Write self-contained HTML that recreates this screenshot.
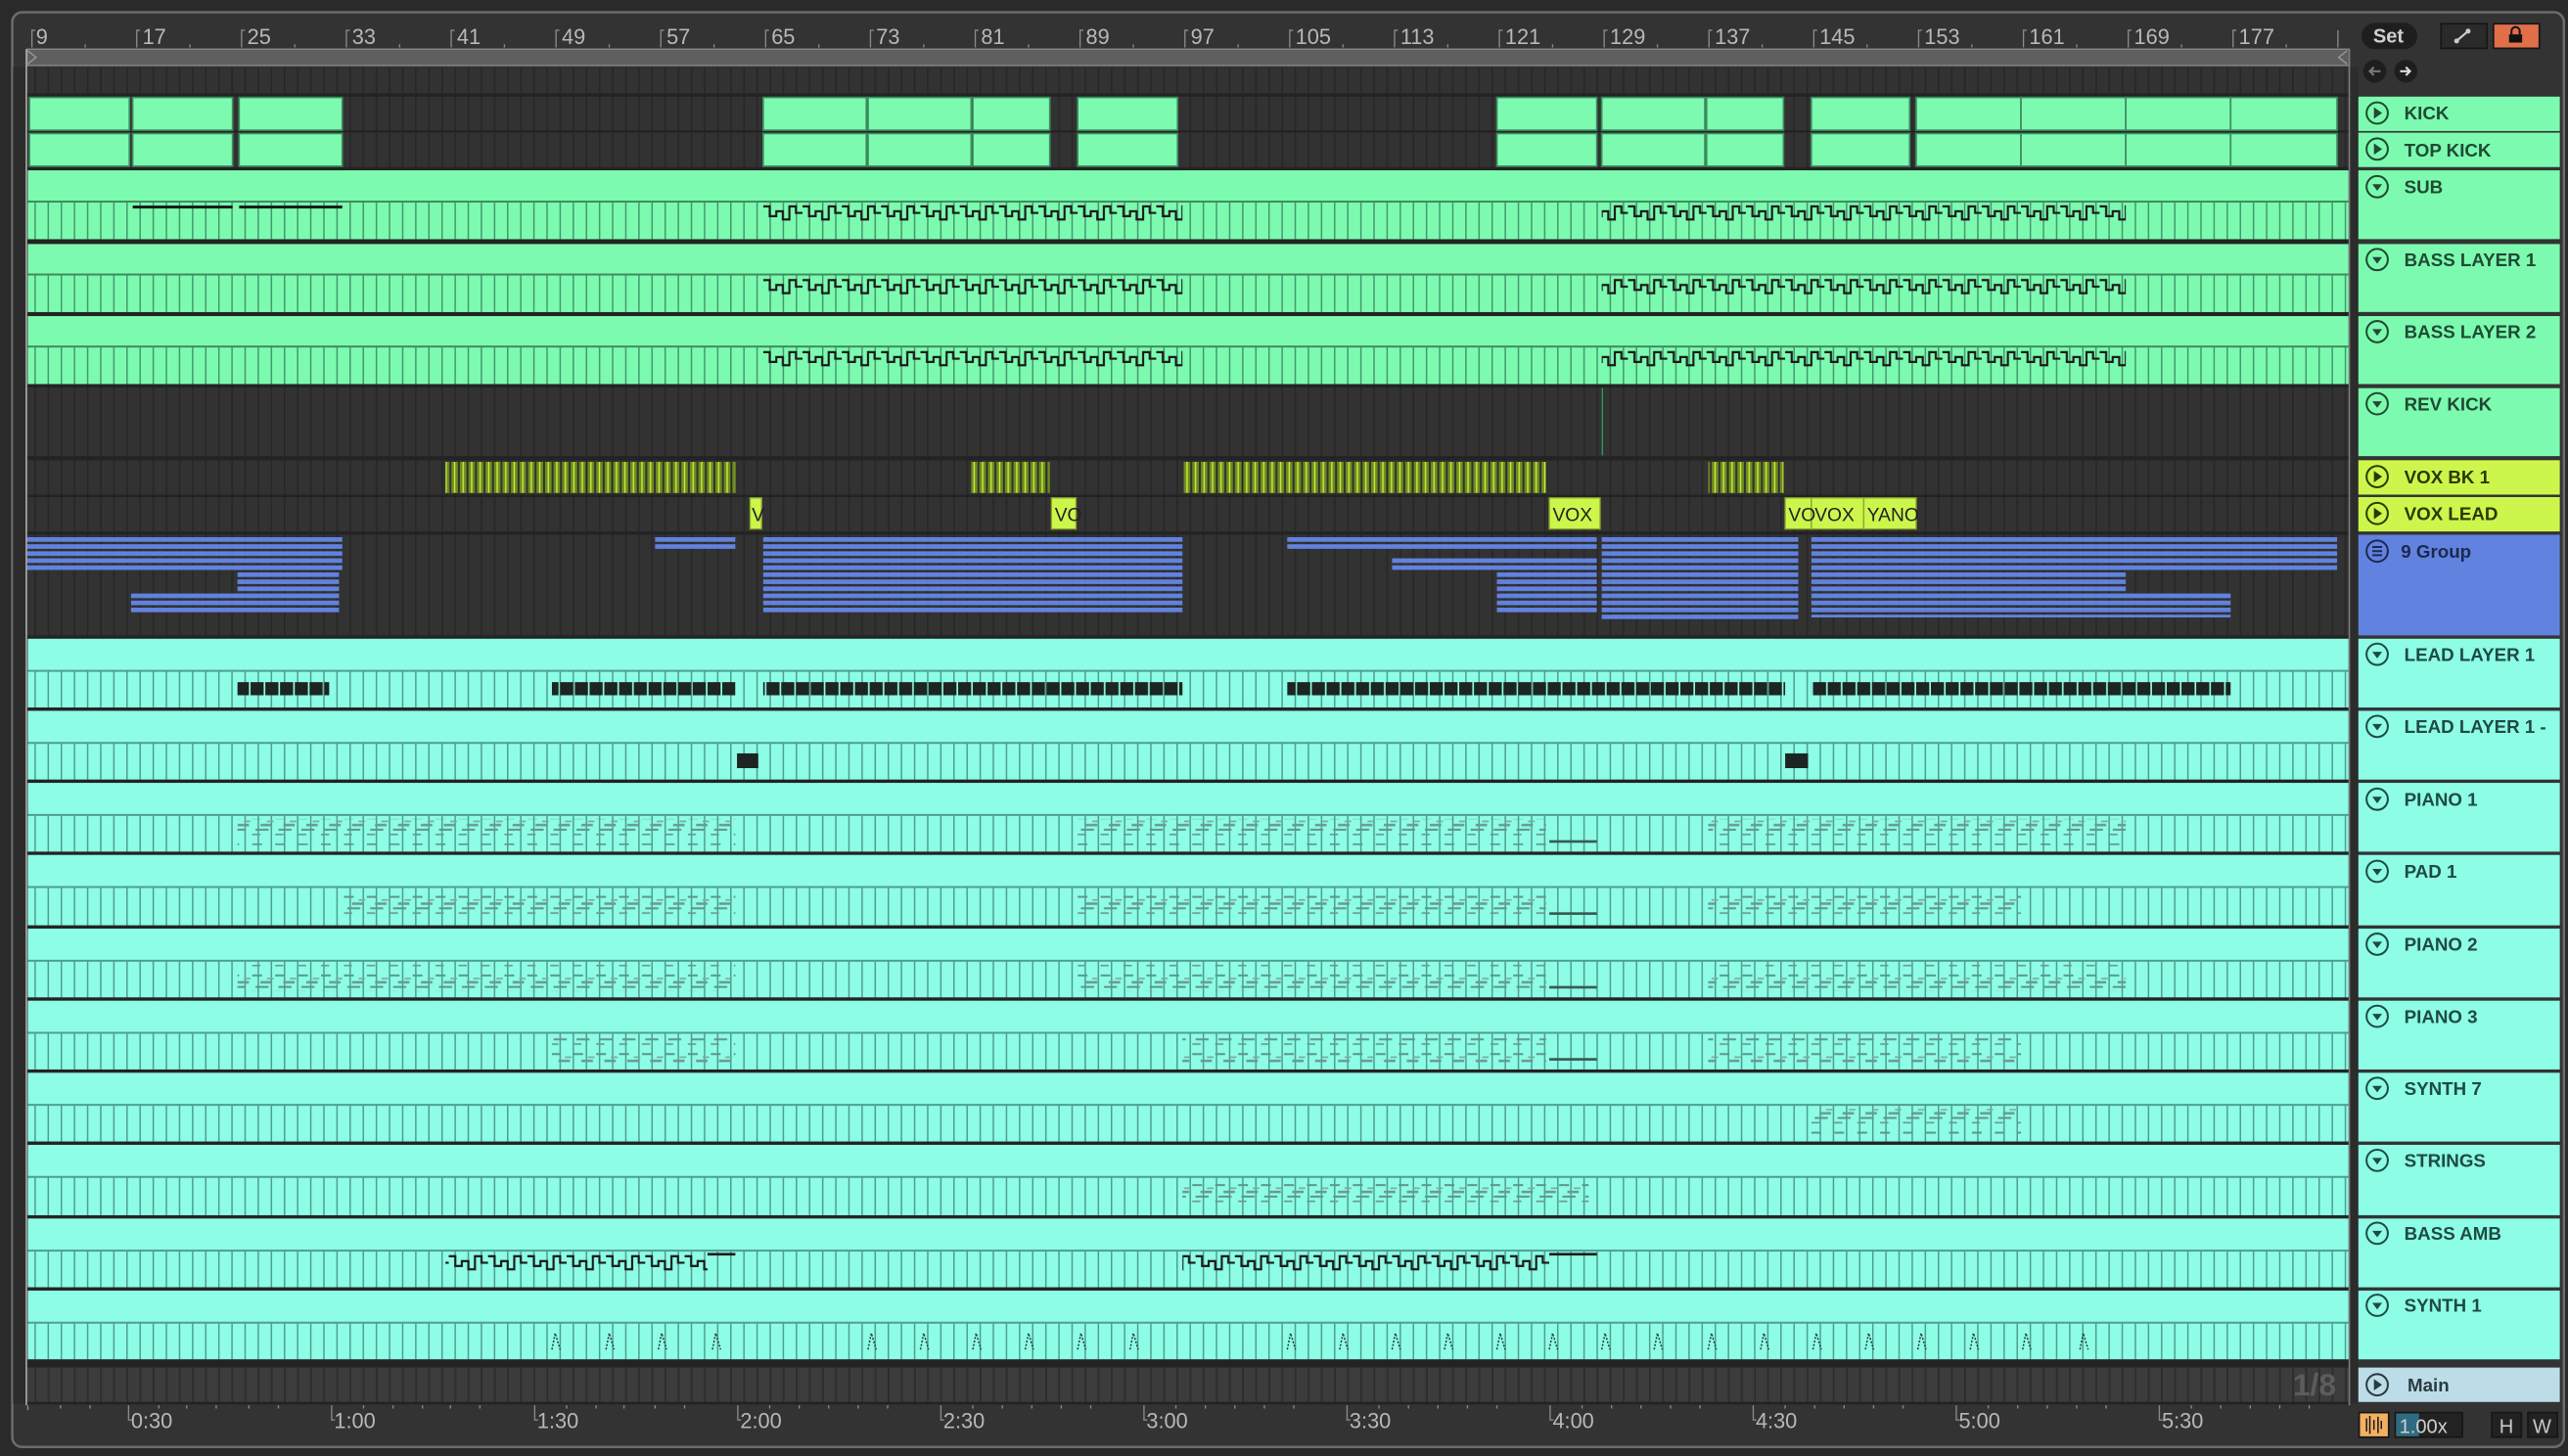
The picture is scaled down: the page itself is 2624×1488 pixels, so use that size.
<!DOCTYPE html>
<html><head><meta charset="utf-8"><style>
html,body{margin:0;padding:0;background:#2a2a2a;overflow:hidden}
svg{display:block}
text{font-family:"Liberation Sans",sans-serif}
.rn{font-family:"Liberation Sans Narrow","Liberation Sans",sans-serif;font-size:13px;fill:#b8b8b8}
.hd{font-size:11.2px;font-weight:bold}
</style></head><body>
<svg width="2624" height="1488" viewBox="0 0 1568 889" preserveAspectRatio="none" xmlns="http://www.w3.org/2000/svg">
<defs>
<pattern id="gd" patternUnits="userSpaceOnUse" x="21" y="0" width="8.015" height="10"><rect width="8.015" height="10" fill="#323232"/><rect width="1" height="10" fill="#272727"/></pattern>
<pattern id="gdb" patternUnits="userSpaceOnUse" x="21" y="0" width="8.015" height="10"><rect width="8.015" height="10" fill="#3c3c3c"/><rect width="1.2" height="10" fill="#2e2e2e"/></pattern>
<pattern id="gG" patternUnits="userSpaceOnUse" x="21" y="0" width="8.015" height="10"><rect width="8.015" height="10" fill="#7cfbb0"/><rect width="0.9" height="10" fill="#45996c"/></pattern>
<pattern id="gC" patternUnits="userSpaceOnUse" x="21" y="0" width="8.015" height="10"><rect width="8.015" height="10" fill="#8dfde6"/><rect width="0.9" height="10" fill="#4f9f90"/></pattern>
<pattern id="sq" patternUnits="userSpaceOnUse" x="466" y="0" width="24" height="40"><path d="M0 2h4v6h4v-3h4v5h4v-8h4v4h4" fill="none" stroke="#1b1b1b" stroke-width="1.3"/></pattern>
<pattern id="wav" patternUnits="userSpaceOnUse" x="0" y="0" width="5.2" height="20"><rect width="4" height="20" fill="#6e8b1f"/><rect x="1.6" width="0.8" height="20" fill="#c9f03e"/></pattern>
<pattern id="bl" patternUnits="userSpaceOnUse" x="0" y="328" width="10" height="4.3"><rect width="10" height="2.8" fill="#6182de"/></pattern>
<pattern id="blk" patternUnits="userSpaceOnUse" x="0" y="0" width="9" height="10"><rect width="8" height="10" fill="#1c2522"/></pattern>
<pattern id="pn" patternUnits="userSpaceOnUse" x="0" y="0" width="14" height="16"><rect x="0" y="3" width="6" height="1.2" fill="#5f958a"/><rect x="5" y="7" width="7" height="1.5" fill="#6a9a90"/><rect x="2" y="10" width="8" height="1.2" fill="#5f958a"/><rect x="9" y="5" width="4" height="1" fill="#7aaaa0"/><rect x="0" y="13" width="5" height="1" fill="#6a9a90"/></pattern>
</defs>

<rect width="1568" height="889" fill="#2a2a2a"/>
<rect x="7.5" y="7.5" width="1558" height="876" rx="6" fill="#333" stroke="#6c6c6c" stroke-width="1.5"/>

<g class="rn">
<text x="22" y="27">9</text><text x="87" y="27">17</text><text x="151" y="27">25</text><text x="215" y="27">33</text><text x="279" y="27">41</text><text x="343" y="27">49</text><text x="407" y="27">57</text><text x="471" y="27">65</text><text x="535" y="27">73</text><text x="599" y="27">81</text><text x="663" y="27">89</text><text x="727" y="27">97</text><text x="791" y="27">105</text><text x="855" y="27">113</text><text x="919" y="27">121</text><text x="983" y="27">129</text><text x="1047" y="27">137</text><text x="1111" y="27">145</text><text x="1175" y="27">153</text><text x="1239" y="27">161</text><text x="1303" y="27">169</text><text x="1367" y="27">177</text>
</g>
<g stroke="#8a8a8a" stroke-width="0.8" fill="none">
<path d="M19.5 29V18.5h2M83.5 29V18.5h2M147.5 29V18.5h2M211.5 29V18.5h2M275.5 29V18.5h2M339.5 29V18.5h2M403.5 29V18.5h2M467.5 29V18.5h2M531.5 29V18.5h2M595.5 29V18.5h2M659.5 29V18.5h2M723.5 29V18.5h2M787.5 29V18.5h2M851.5 29V18.5h2M915.5 29V18.5h2M979.5 29V18.5h2M1043.5 29V18.5h2M1107.5 29V18.5h2M1171.5 29V18.5h2M1235.5 29V18.5h2M1299.5 29V18.5h2M1363.5 29V18.5h2M1427.5 29V18.5"/>
<path d="M52 29v-2M116 29v-2M180 29v-2M244 29v-2M308 29v-2M372 29v-2M436 29v-2M500 29v-2M564 29v-2M628 29v-2M692 29v-2M756 29v-2M820 29v-2M884 29v-2M948 29v-2M1012 29v-2M1076 29v-2M1140 29v-2M1204 29v-2M1268 29v-2M1332 29v-2M1396 29v-2"/>
</g>
<rect x="16.5" y="30" width="1418" height="10" fill="#5f5f5f" stroke="#8a8a8a" stroke-width="0.8"/>
<path d="M17 31l5 4l-5 4M1433 31l-5 4l5 4" fill="none" stroke="#9a9a9a" stroke-width="0.8"/>

<rect x="16" y="41" width="1418" height="790" fill="url(#gd)"/>
<rect x="8" y="41" width="8" height="816" fill="#2c2c2c"/>
<g fill="#232323">
<rect x="16" y="57" width="1418" height="2"/><rect x="16" y="79.5" width="1418" height="1.5"/><rect x="16" y="102" width="1418" height="2"/>
<rect x="16" y="146" width="1418" height="3"/><rect x="16" y="190.5" width="1418" height="2.5"/><rect x="16" y="234.5" width="1418" height="2"/>
<rect x="16" y="278.5" width="1418" height="2.5"/><rect x="16" y="302" width="1418" height="1.5"/><rect x="16" y="324.5" width="1418" height="2"/>
<rect x="16" y="388" width="1418" height="2"/>
</g>

<g fill="#7cfbb0" stroke="#3d8c5f" stroke-width="1">
<rect x="18" y="59.5" width="61" height="20"/><rect x="81" y="59.5" width="61" height="20"/><rect x="146" y="59.5" width="63" height="20"/>
<rect x="466" y="59.5" width="63" height="20"/><rect x="530" y="59.5" width="63" height="20"/><rect x="594" y="59.5" width="47" height="20"/><rect x="658" y="59.5" width="61" height="20"/>
<rect x="914" y="59.5" width="61" height="20"/><rect x="978" y="59.5" width="63" height="20"/><rect x="1042" y="59.5" width="47" height="20"/><rect x="1106" y="59.5" width="60" height="20"/>
<rect x="1170" y="59.5" width="64" height="20"/><rect x="1234" y="59.5" width="64" height="20"/><rect x="1298" y="59.5" width="64" height="20"/><rect x="1362" y="59.5" width="65" height="20"/>
<rect x="18" y="81.5" width="61" height="20"/><rect x="81" y="81.5" width="61" height="20"/><rect x="146" y="81.5" width="63" height="20"/>
<rect x="466" y="81.5" width="63" height="20"/><rect x="530" y="81.5" width="63" height="20"/><rect x="594" y="81.5" width="47" height="20"/><rect x="658" y="81.5" width="61" height="20"/>
<rect x="914" y="81.5" width="61" height="20"/><rect x="978" y="81.5" width="63" height="20"/><rect x="1042" y="81.5" width="47" height="20"/><rect x="1106" y="81.5" width="60" height="20"/>
<rect x="1170" y="81.5" width="64" height="20"/><rect x="1234" y="81.5" width="64" height="20"/><rect x="1298" y="81.5" width="64" height="20"/><rect x="1362" y="81.5" width="65" height="20"/>
</g>

<g>
<rect x="17" y="104" width="1417" height="42" fill="#7cfbb0"/><rect x="17" y="123.5" width="1417" height="22.5" fill="url(#gG)"/><rect x="17" y="122.5" width="1417" height="1.2" fill="#3d8c5f"/>
<rect x="17" y="149" width="1417" height="41.5" fill="#7cfbb0"/><rect x="17" y="168" width="1417" height="22.5" fill="url(#gG)"/><rect x="17" y="167" width="1417" height="1.2" fill="#3d8c5f"/>
<rect x="17" y="193" width="1417" height="41.5" fill="#7cfbb0"/><rect x="17" y="212" width="1417" height="22.5" fill="url(#gG)"/><rect x="17" y="211" width="1417" height="1.2" fill="#3d8c5f"/>
</g>
<g fill="#1b1b1b">
<rect x="81" y="125.5" width="61" height="1.8"/><rect x="146" y="125.5" width="63" height="1.8"/>
</g>
<g transform="translate(0,124)" fill="url(#sq)"><rect x="466" y="0" width="256" height="12"/><rect x="978" y="0" width="320" height="12"/></g>
<g transform="translate(0,169)" fill="url(#sq)"><rect x="466" y="0" width="256" height="12"/><rect x="978" y="0" width="320" height="12"/></g>
<g transform="translate(0,213)" fill="url(#sq)"><rect x="466" y="0" width="256" height="12"/><rect x="978" y="0" width="320" height="12"/></g>

<rect x="978" y="237" width="0.8" height="41" fill="#2f9a63"/>

<g fill="url(#wav)">
<rect x="272" y="282" width="177" height="19"/><rect x="593" y="282" width="48" height="19"/><rect x="722" y="282" width="222" height="19"/><rect x="1043" y="282" width="46" height="19"/>
</g>
<g fill="#cdf64d" stroke="#8ba82a" stroke-width="0.8">
<rect x="458" y="304" width="7" height="19"/><rect x="642" y="304" width="15" height="19"/><rect x="946" y="304" width="31" height="19"/><rect x="1090" y="304" width="16" height="19"/><rect x="1106" y="304" width="32" height="19"/><rect x="1138" y="304" width="32" height="19"/>
</g>
<g font-size="11.5" fill="#222" font-family="Liberation Sans">
<text x="459" y="318">V</text><text x="644" y="318">VO</text><text x="948" y="318">VOX</text><text x="1092" y="318">VO</text><text x="1108" y="318">VOX</text><text x="1140" y="318">YANO</text>
</g>

<g fill="url(#bl)">
<rect x="16" y="328" width="193" height="21"/><rect x="145" y="349" width="62" height="14"/><rect x="80" y="362" width="127" height="13"/>
<rect x="400" y="328" width="49" height="8"/>
<rect x="466" y="328" width="256" height="47"/>
<rect x="786" y="328" width="189" height="8"/><rect x="850" y="340" width="125" height="8"/><rect x="914" y="349" width="61" height="26"/>
<rect x="978" y="328" width="120" height="50"/>
<rect x="1106" y="328" width="321" height="21"/><rect x="1106" y="349" width="192" height="14"/><rect x="1106" y="362" width="256" height="15"/>
</g>

<g>
<rect x="17" y="390" width="1417" height="42" fill="#8dfde6"/><rect x="17" y="410" width="1417" height="22" fill="url(#gC)"/><rect x="17" y="409" width="1417" height="1.2" fill="#4f9f90"/>
<rect x="16" y="432" width="1418" height="2" fill="#232323"/>
<rect x="17" y="434" width="1417" height="42" fill="#8dfde6"/><rect x="17" y="454" width="1417" height="22" fill="url(#gC)"/><rect x="17" y="453" width="1417" height="1.2" fill="#4f9f90"/>
<rect x="16" y="476" width="1418" height="2" fill="#232323"/>
<rect x="17" y="478" width="1417" height="42" fill="#8dfde6"/><rect x="17" y="498" width="1417" height="22" fill="url(#gC)"/><rect x="17" y="497" width="1417" height="1.2" fill="#4f9f90"/>
<rect x="16" y="520" width="1418" height="2" fill="#232323"/>
<rect x="17" y="522" width="1417" height="43" fill="#8dfde6"/><rect x="17" y="542" width="1417" height="23" fill="url(#gC)"/><rect x="17" y="541" width="1417" height="1.2" fill="#4f9f90"/>
<rect x="16" y="565" width="1418" height="2" fill="#232323"/>
<rect x="17" y="567" width="1417" height="42" fill="#8dfde6"/><rect x="17" y="587" width="1417" height="22" fill="url(#gC)"/><rect x="17" y="586" width="1417" height="1.2" fill="#4f9f90"/>
<rect x="16" y="609" width="1418" height="2" fill="#232323"/>
<rect x="17" y="611" width="1417" height="42" fill="#8dfde6"/><rect x="17" y="631" width="1417" height="22" fill="url(#gC)"/><rect x="17" y="630" width="1417" height="1.2" fill="#4f9f90"/>
<rect x="16" y="653" width="1418" height="2" fill="#232323"/>
<rect x="17" y="655" width="1417" height="42" fill="#8dfde6"/><rect x="17" y="675" width="1417" height="22" fill="url(#gC)"/><rect x="17" y="674" width="1417" height="1.2" fill="#4f9f90"/>
<rect x="16" y="697" width="1418" height="2" fill="#232323"/>
<rect x="17" y="699" width="1417" height="43" fill="#8dfde6"/><rect x="17" y="719" width="1417" height="23" fill="url(#gC)"/><rect x="17" y="718" width="1417" height="1.2" fill="#4f9f90"/>
<rect x="16" y="742" width="1418" height="2" fill="#232323"/>
<rect x="17" y="744" width="1417" height="42" fill="#8dfde6"/><rect x="17" y="764" width="1417" height="22" fill="url(#gC)"/><rect x="17" y="763" width="1417" height="1.2" fill="#4f9f90"/>
<rect x="16" y="786" width="1418" height="2" fill="#232323"/>
<rect x="17" y="788" width="1417" height="42" fill="#8dfde6"/><rect x="17" y="808" width="1417" height="22" fill="url(#gC)"/><rect x="17" y="807" width="1417" height="1.2" fill="#4f9f90"/>
<rect x="16" y="830" width="1418" height="5" fill="#232323"/>
</g>
<g fill="url(#blk)">
<rect x="145" y="416.5" width="56" height="8"/><rect x="337" y="416.5" width="112" height="8"/><rect x="466" y="416.5" width="256" height="8"/><rect x="786" y="416.5" width="304" height="8"/><rect x="1106" y="416.5" width="256" height="8"/>
</g>
<rect x="450" y="460" width="13" height="9" fill="#1c2522"/><rect x="1090" y="460" width="14" height="9" fill="#1c2522"/>
<g fill="url(#pn)">
<rect x="145" y="500" width="304" height="16"/><rect x="658" y="500" width="286" height="16"/><rect x="1043" y="500" width="255" height="16"/>
<rect x="210" y="544" width="239" height="16"/><rect x="658" y="544" width="286" height="16"/><rect x="1043" y="544" width="191" height="16"/>
<rect x="145" y="589" width="304" height="16"/><rect x="658" y="589" width="286" height="16"/><rect x="1043" y="589" width="255" height="16"/>
<rect x="337" y="633" width="112" height="16"/><rect x="722" y="633" width="222" height="16"/><rect x="1043" y="633" width="191" height="16"/>
<rect x="1106" y="677" width="128" height="16"/>
<rect x="722" y="721" width="248" height="16"/>
</g>
<g fill="#3b5a53">
<rect x="946" y="513" width="29" height="1.6"/><rect x="946" y="557" width="29" height="1.6"/><rect x="946" y="602" width="29" height="1.6"/><rect x="946" y="646" width="29" height="1.6"/>
</g>
<g transform="translate(0,765)" fill="url(#sq)"><rect x="272" y="0" width="160" height="12"/><rect x="722" y="0" width="224" height="12"/></g>
<rect x="432" y="765" width="17" height="1.6" fill="#1b1b1b"/><rect x="946" y="765" width="29" height="1.6" fill="#1b1b1b"/>
<g fill="none" stroke="#2a3a36" stroke-width="0.9" stroke-dasharray="1.2 1">
<path d="M337 824l2-10l3 10M370 824l2-10l3 10M402 824l2-10l3 10M435 824l2-10l3 10M530 824l2-10l3 10M562 824l2-10l3 10M594 824l2-10l3 10M626 824l2-10l3 10M658 824l2-10l3 10M690 824l2-10l3 10M786 824l2-10l3 10M818 824l2-10l3 10M850 824l2-10l3 10M882 824l2-10l3 10M914 824l2-10l3 10M946 824l2-10l3 10M978 824l2-10l3 10M1010 824l2-10l3 10M1043 824l2-10l3 10M1075 824l2-10l3 10M1107 824l2-10l3 10M1139 824l2-10l3 10M1171 824l2-10l3 10M1203 824l2-10l3 10M1235 824l2-10l3 10M1270 824l2-10l3 10"/>
</g>

<rect x="16" y="835" width="1418" height="21" fill="url(#gdb)"/>
<text x="1400" y="852" font-size="19" font-weight="bold" fill="#5c5c5c">1/8</text>
<rect x="16" y="856" width="1418" height="1.5" fill="#232323"/>

<g fill="none" stroke="#8a8a8a" stroke-width="0.8">
<path d="M17 858v3M37 858v2M55 858v2M97 858v2M114 858v2M132 858v2M152 858v2M170 858v2M222 858v2M240 858v2M258 858v2M275 858v2M293 858v2M346 858v2M364 858v2M381 858v2M400 858v2M418 858v2M470 858v2M488 858v2M506 858v2M524 858v2M542 858v2M594 858v2M612 858v2M630 858v2M648 858v2M666 858v2M718 858v2M736 858v2M754 858v2M772 858v2M790 858v2M842 858v2M860 858v2M878 858v2M896 858v2M914 858v2M966 858v2M984 858v2M1002 858v2M1020 858v2M1038 858v2M1090 858v2M1108 858v2M1126 858v2M1144 858v2M1162 858v2M1214 858v2M1232 858v2M1250 858v2M1268 858v2M1286 858v2M1338 858v2M1356 858v2M1374 858v2M1392 858v2M1410 858v2"/>
<path d="M78.5 858v9h2M202.5 858v9h2M326.5 858v9h2M450.5 858v9h2M574.5 858v9h2M698.5 858v9h2M822.5 858v9h2M946.5 858v9h2M1070.5 858v9h2M1194.5 858v9h2M1318.5 858v9h2"/>
</g>
<g class="rn">
<text x="80" y="872">0:30</text><text x="204" y="872">1:00</text><text x="328" y="872">1:30</text><text x="452" y="872">2:00</text><text x="576" y="872">2:30</text><text x="700" y="872">3:00</text><text x="824" y="872">3:30</text><text x="948" y="872">4:00</text><text x="1072" y="872">4:30</text><text x="1196" y="872">5:00</text><text x="1320" y="872">5:30</text>
</g>

<rect x="15.6" y="30" width="1" height="828" fill="#a8a8a8"/>
<rect x="1434" y="30" width="1" height="828" fill="#7a7a7a"/>
<rect x="1435" y="41" width="5" height="816" fill="#2c2c2c"/>

<rect x="1442" y="14" width="34" height="16" rx="8" fill="#1e1e1e"/>
<text x="1449" y="26" font-size="12" font-weight="bold" fill="#d0d0d0">Set</text>
<rect x="1490.5" y="14.5" width="28" height="15" fill="#2a2a2a" stroke="#161616"/>
<path d="M1500 25l7-6" stroke="#ccc" stroke-width="1.3"/><circle cx="1500" cy="25" r="1.5" fill="#ccc"/><circle cx="1507" cy="19" r="1.5" fill="#ccc"/>
<rect x="1522.5" y="14.5" width="28" height="15" fill="#e06f4a" stroke="#161616"/>
<rect x="1532" y="21" width="8" height="5" fill="#111"/><path d="M1533.5 21v-2a2.5 2.5 0 0 1 5 0v2" fill="none" stroke="#111" stroke-width="1.2"/>
<circle cx="1450" cy="43.5" r="7" fill="#1e1e1e"/><circle cx="1469" cy="43.5" r="7" fill="#1e1e1e"/>
<path d="M1453.5 43.5h-6M1449.5 41l-2.5 2.5l2.5 2.5" fill="none" stroke="#777" stroke-width="1.3"/>
<path d="M1465.5 43.5h6M1469 41l2.5 2.5l-2.5 2.5" fill="none" stroke="#ddd" stroke-width="1.3"/>

<g>
<rect x="1440" y="59" width="123" height="21" fill="#7cfbb0"/>
<rect x="1440" y="81" width="123" height="21" fill="#7cfbb0"/>
<rect x="1440" y="104" width="123" height="42" fill="#7cfbb0"/>
<rect x="1440" y="149" width="123" height="41.5" fill="#7cfbb0"/>
<rect x="1440" y="193" width="123" height="41.5" fill="#7cfbb0"/>
<rect x="1440" y="237" width="123" height="41.5" fill="#7cfbb0"/>
<rect x="1440" y="281" width="123" height="21" fill="#cdf64d"/>
<rect x="1440" y="303.5" width="123" height="21" fill="#cdf64d"/>
<rect x="1440" y="326.5" width="123" height="61.5" fill="#6182de"/>
<rect x="1440" y="390" width="123" height="42" fill="#8dfde6"/>
<rect x="1440" y="434" width="123" height="42" fill="#8dfde6"/>
<rect x="1440" y="478" width="123" height="42" fill="#8dfde6"/>
<rect x="1440" y="522" width="123" height="43" fill="#8dfde6"/>
<rect x="1440" y="567" width="123" height="42" fill="#8dfde6"/>
<rect x="1440" y="611" width="123" height="42" fill="#8dfde6"/>
<rect x="1440" y="655" width="123" height="42" fill="#8dfde6"/>
<rect x="1440" y="699" width="123" height="43" fill="#8dfde6"/>
<rect x="1440" y="744" width="123" height="42" fill="#8dfde6"/>
<rect x="1440" y="788" width="123" height="42" fill="#8dfde6"/>
<rect x="1440" y="835" width="123" height="21" fill="#bcdde7"/>
</g>
<g fill="none" stroke-width="1.2">
<g stroke="#1f4a33"><circle cx="1451.5" cy="69" r="6.5"/><circle cx="1451.5" cy="91" r="6.5"/><circle cx="1451.5" cy="114" r="6.5"/><circle cx="1451.5" cy="158.5" r="6.5"/><circle cx="1451.5" cy="202.5" r="6.5"/><circle cx="1451.5" cy="246.5" r="6.5"/></g>
<g stroke="#2b3a00"><circle cx="1451.5" cy="291" r="6.5"/><circle cx="1451.5" cy="313.5" r="6.5"/></g>
<g stroke="#1c2850"><circle cx="1451.5" cy="336.5" r="6.5"/><path d="M1448.5 334h6M1448.5 336.5h6M1448.5 339h6"/></g>
<g stroke="#1f4a42"><circle cx="1451.5" cy="399.5" r="6.5"/><circle cx="1451.5" cy="443.5" r="6.5"/><circle cx="1451.5" cy="488" r="6.5"/><circle cx="1451.5" cy="532" r="6.5"/><circle cx="1451.5" cy="576.5" r="6.5"/><circle cx="1451.5" cy="620.5" r="6.5"/><circle cx="1451.5" cy="664.5" r="6.5"/><circle cx="1451.5" cy="708.5" r="6.5"/><circle cx="1451.5" cy="753" r="6.5"/><circle cx="1451.5" cy="797" r="6.5"/></g>
<g stroke="#2a3b42"><circle cx="1451.5" cy="845.5" r="6.5"/></g>
</g>
<g fill="#1f4a33">
<path d="M1449.5 65.5l5 3.5l-5 3.5z"/><path d="M1449.5 87.5l5 3.5l-5 3.5z"/>
<path d="M1448.5 112.5h6l-3 4z"/><path d="M1448.5 157h6l-3 4z"/><path d="M1448.5 201h6l-3 4z"/><path d="M1448.5 245h6l-3 4z"/>
</g>
<g fill="#2b3a00"><path d="M1449.5 287.5l5 3.5l-5 3.5z"/><path d="M1449.5 310l5 3.5l-5 3.5z"/></g>
<g fill="#1f4a42">
<path d="M1448.5 398h6l-3 4z"/><path d="M1448.5 442h6l-3 4z"/><path d="M1448.5 486.5h6l-3 4z"/><path d="M1448.5 530.5h6l-3 4z"/><path d="M1448.5 575h6l-3 4z"/><path d="M1448.5 619h6l-3 4z"/><path d="M1448.5 663h6l-3 4z"/><path d="M1448.5 707h6l-3 4z"/><path d="M1448.5 751.5h6l-3 4z"/><path d="M1448.5 795.5h6l-3 4z"/>
</g>
<path d="M1449.5 842l5 3.5l-5 3.5z" fill="#2a3b42"/>
<g class="hd">
<g fill="#1f4a33"><text x="1468" y="73">KICK</text><text x="1468" y="95.5">TOP KICK</text><text x="1468" y="118">SUB</text><text x="1468" y="162.5">BASS LAYER 1</text><text x="1468" y="206.5">BASS LAYER 2</text><text x="1468" y="250.5">REV KICK</text></g>
<g fill="#2b3a00"><text x="1468" y="295">VOX BK 1</text><text x="1468" y="317.5">VOX LEAD</text></g>
<text x="1466" y="340.5" fill="#1c2850">9 Group</text>
<g fill="#1f4a42"><text x="1468" y="403.5">LEAD LAYER 1</text><text x="1468" y="447.5">LEAD LAYER 1 -</text><text x="1468" y="492">PIANO 1</text><text x="1468" y="536">PAD 1</text><text x="1468" y="580.5">PIANO 2</text><text x="1468" y="624.5">PIANO 3</text><text x="1468" y="668.5">SYNTH 7</text><text x="1468" y="712.5">STRINGS</text><text x="1468" y="757">BASS AMB</text><text x="1468" y="801">SYNTH 1</text></g>
<text x="1470" y="849.5" fill="#2a3b42">Main</text>
</g>

<rect x="1440.5" y="862.5" width="18" height="15" fill="#f2b063" stroke="#161616"/>
<path d="M1445 866v8M1447 864.5v11M1449.5 867v6M1452 865v10M1454 867.5v5" stroke="#1a1a1a" stroke-width="0.9"/>
<rect x="1462.5" y="862.5" width="41" height="15" fill="#222" stroke="#161616"/>
<rect x="1463" y="863" width="14" height="14" fill="#2e6b80"/>
<text x="1465" y="875" font-size="12" fill="#cfcfcf">1.00x</text>
<rect x="1521.5" y="862.5" width="18" height="15" fill="#222" stroke="#161616"/><text x="1526" y="875" font-size="12" fill="#c8c8c8">H</text>
<rect x="1543.5" y="862.5" width="18" height="15" fill="#222" stroke="#161616"/><text x="1546.5" y="875" font-size="12" fill="#c8c8c8">W</text>
</svg>
</body></html>
